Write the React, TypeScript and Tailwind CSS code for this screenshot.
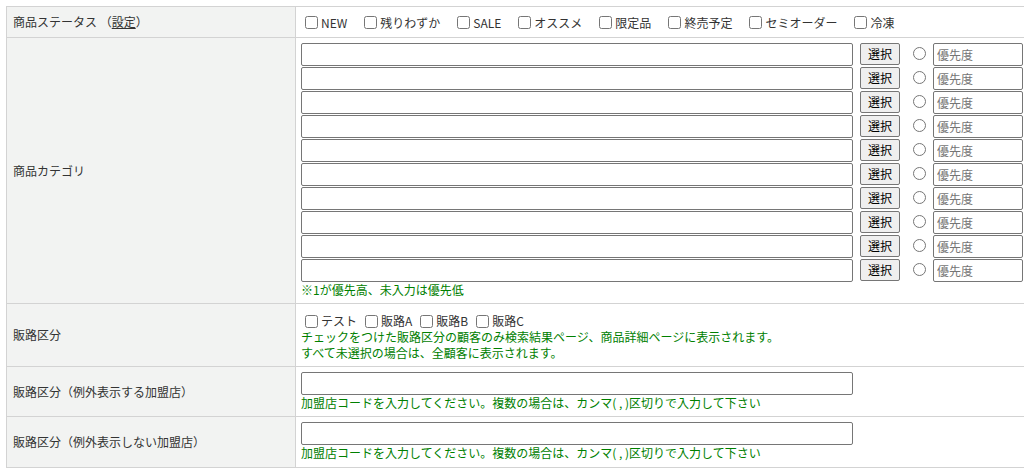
import React from 'react';

const statuses = ['NEW', '残りわずか', 'SALE', 'オススメ', '限定品', '終売予定', 'セミオーダー', '冷凍'];
const channels = ['テスト', '販路A', '販路B', '販路C'];

const labelCell =
  'border border-[#d3d3d3] bg-[#f2f3f2] pl-[6px] pr-2 align-middle text-left font-normal text-[12px] text-[#333]';
const valueCell = 'border border-[#d3d3d3] bg-white pl-[5px] pr-0 align-top text-[12px] text-[#333]';
const textInput = 'block h-[23px] w-[552px] rounded-[2px] border border-[#767676] bg-white px-1 text-[12px]';

function Check({ label, className }: { label: string; className?: string }) {
  return (
    <label className={`inline-flex items-center ${className ?? ''}`}>
      <input type="checkbox" className="m-0 ml-[4px] mr-[3px] h-[13px] w-[13px]" />
      <span>{label}</span>
    </label>
  );
}

export default function App() {
  return (
    <div
      className="h-[470px] w-[1024px] overflow-hidden bg-white pl-[6px] pt-[6px]"
      style={{ fontFamily: '"Noto Sans CJK JP", "Noto Sans", sans-serif' }}
    >
      <table className="w-[1030px] border-collapse">
        <tbody>
          {/* 商品ステータス */}
          <tr className="h-[31px]">
            <th className={`${labelCell} w-[289px]`}>
              商品ステータス （<span className="underline">設定</span>）
            </th>
            <td className={`${valueCell} !align-middle`}>
              <div className="flex items-center pt-[1px]">
                {statuses.map((s) => (
                  <Check key={s} label={s} className="mr-[13px]" />
                ))}
              </div>
            </td>
          </tr>

          {/* 商品カテゴリ */}
          <tr className="h-[266px]">
            <th className={labelCell}>商品カテゴリ</th>
            <td className={`${valueCell} pt-[5px]`}>
              <div className="flex flex-col">
                {Array.from({ length: 10 }).map((_, i) => (
                  <div key={i} className="flex h-[24px] items-start">
                    <input type="text" className={textInput} />
                    <button className="ml-[7px] h-[22px] w-[40px] rounded-[2px] border border-[#767676] bg-[#efefef] text-[12px] text-black">
                      選択
                    </button>
                    <input type="radio" name="main" className="m-0 ml-[13px] mt-[4px] h-[13px] w-[13px]" />
                    <input
                      type="text"
                      placeholder="優先度"
                      className="ml-[7px] block h-[23px] w-[90px] rounded-[2px] border border-[#767676] bg-white px-[3px] text-[12px] placeholder:text-[#757575]"
                    />
                  </div>
                ))}
              </div>
              <p className="mt-[-1px] text-[12px] leading-[16px] text-[#008000]">※1が優先高、未入力は優先低</p>
            </td>
          </tr>

          {/* 販路区分 */}
          <tr className="h-[63px]">
            <th className={labelCell}>販路区分</th>
            <td className={`${valueCell} pt-[9px]`}>
              <div className="flex items-center leading-[16px]">
                {channels.map((c) => (
                  <Check key={c} label={c} className="mr-[4px]" />
                ))}
              </div>
              <p className="leading-[16px] text-[#008000]">
                チェックをつけた販路区分の顧客のみ検索結果ページ、商品詳細ページに表示されます。
                <br />
                すべて未選択の場合は、全顧客に表示されます。
              </p>
            </td>
          </tr>

          {/* 例外表示する */}
          <tr className="h-[50px]">
            <th className={labelCell}>販路区分（例外表示する加盟店）</th>
            <td className={`${valueCell} pt-[5px]`}>
              <input type="text" className={textInput} />
              <p className="leading-[16px] text-[#008000]">
                加盟店コードを入力してください。複数の場合は、カンマ( , )区切りで入力して下さい
              </p>
            </td>
          </tr>

          {/* 例外表示しない */}
          <tr className="h-[51px]">
            <th className={labelCell}>販路区分（例外表示しない加盟店）</th>
            <td className={`${valueCell} pt-[5px]`}>
              <input type="text" className={textInput} />
              <p className="leading-[16px] text-[#008000]">
                加盟店コードを入力してください。複数の場合は、カンマ( , )区切りで入力して下さい
              </p>
            </td>
          </tr>
        </tbody>
      </table>
    </div>
  );
}
